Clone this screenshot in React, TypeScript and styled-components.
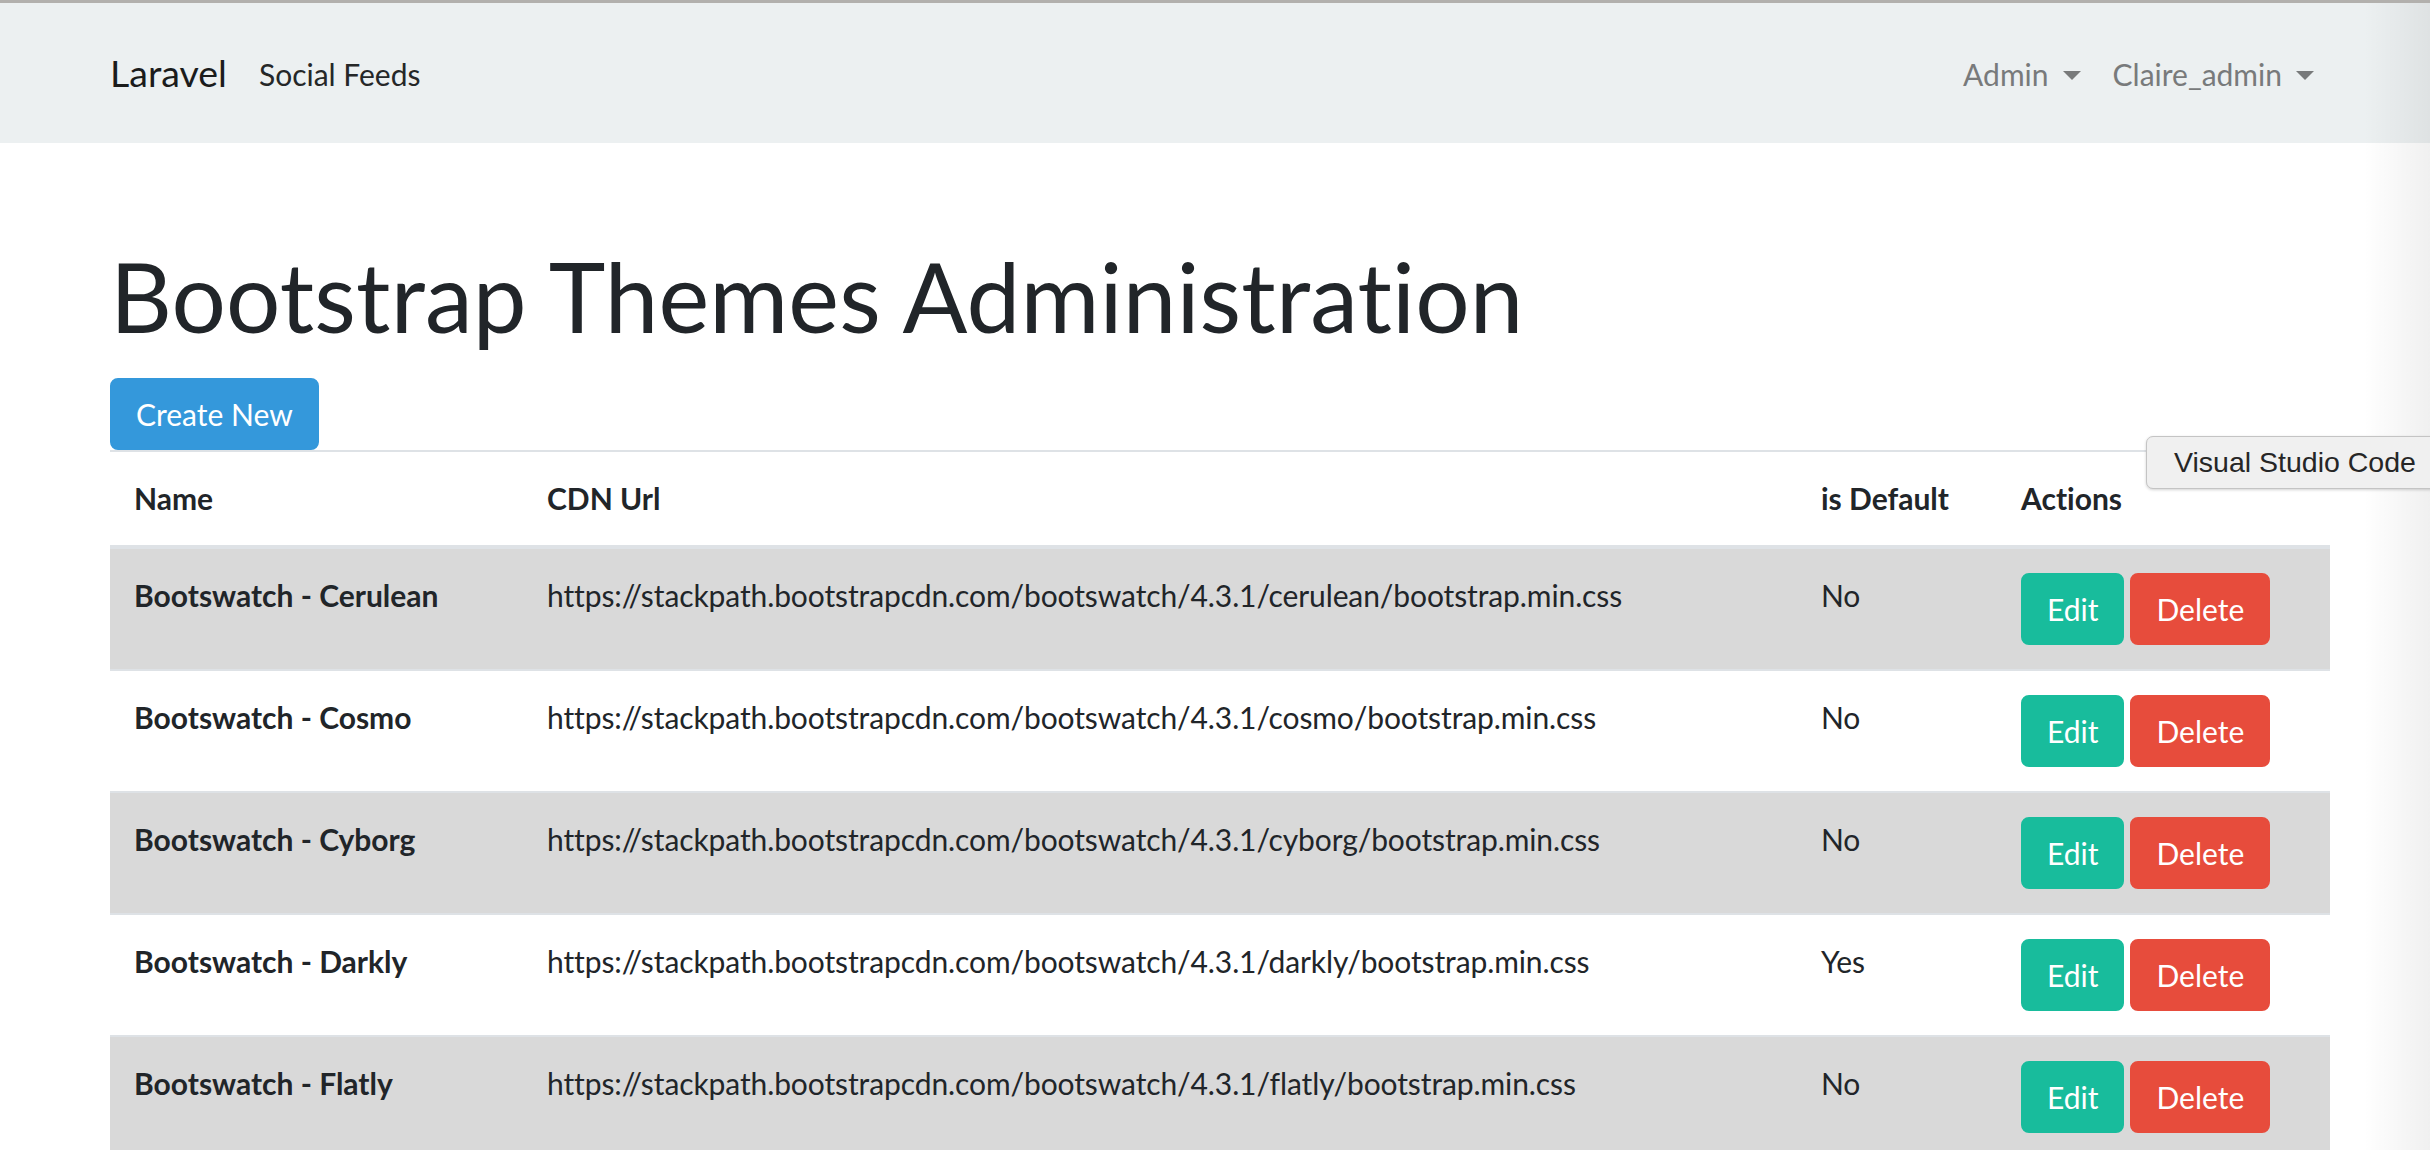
import React from 'react';
import styled, { createGlobalStyle } from 'styled-components';

const GlobalStyle = createGlobalStyle`
  html, body { margin: 0; padding: 0; overflow: hidden; background: #ffffff; }
  body {
    font-family: Lato, "Noto Sans", sans-serif;
    font-size: 30px;
    line-height: 1.5;
    color: #212529;
    font-variant-ligatures: none;
  }
  * { box-sizing: border-box; }
`;

const Page = styled.div`
  position: relative;
  min-height: 1150px;
  border-top: 3px solid #b2b0ad;
`;

const NavBar = styled.nav`
  background: #ecf0f1;
  height: 140px;
`;

const Container = styled.div`
  width: 2280px;
  margin-left: 80px;
  padding: 0 30px;
`;

const NavInner = styled(Container)`
  display: flex;
  align-items: center;
  height: 100%;
`;

const Brand = styled.a`
  font-size: 37.5px;
  line-height: 56px;
  color: #1b1c1c;
  text-decoration: none;
  margin-right: 32px;
`;

const NavGroup = styled.div<{ $right?: boolean }>`
  display: flex;
  align-items: center;
  margin-left: ${(p) => (p.$right ? 'auto' : '0')};
`;

const NavLink = styled.a<{ $active?: boolean; $flush?: boolean }>`
  display: flex;
  align-items: center;
  font-size: 30px;
  line-height: 45px;
  padding: 16px ${(p) => (p.$flush ? '0' : '16px')};
  color: ${(p) => (p.$active ? '#252728' : '#787a7b')};
  text-decoration: none;
  margin-top: 3px;
`;

const Caret = styled.span`
  display: inline-block;
  width: 0;
  height: 0;
  margin-left: 14px;
  border-top: 9px solid currentColor;
  border-left: 9px solid transparent;
  border-right: 9px solid transparent;
  margin-top: 2px;
`;

const Main = styled(Container)`
  padding-top: 95px;
`;

const Title = styled.h1`
  margin: 0 0 25px;
  font-size: 96px;
  font-weight: 400;
  line-height: 1.2;
  letter-spacing: 0.15px;
  color: #212529;
`;

const Toolbar = styled.div`
  display: flex;
`;

const colors = {
  info: '#3498db',
  success: '#18bc9c',
  danger: '#e74c3c',
};

const Button = styled.button<{ $variant: keyof typeof colors }>`
  font-family: Lato, "Noto Sans", sans-serif;
  font-size: 30px;
  line-height: 44px;
  padding: 12px 24px;
  border: 2px solid ${(p) => colors[p.$variant]};
  background: ${(p) => colors[p.$variant]};
  color: #ffffff;
  border-radius: 8px;
  cursor: pointer;
`;

const Table = styled.table`
  width: 2220px;
  border-collapse: separate;
  border-spacing: 0;
  table-layout: fixed;
`;

const Th = styled.th<{ $w: number }>`
  width: ${(p) => p.$w}px;
  text-align: left;
  font-weight: 700;
  padding: 24px;
  line-height: 45px;
  border-top: 2px solid #dee2e6;
  border-bottom: 2px solid #dee2e6;
  vertical-align: bottom;
`;

const Row = styled.tr<{ $striped: boolean }>`
  background: ${(p) => (p.$striped ? '#d9d9d9' : '#ffffff')};
`;

const Td = styled.td<{ $bold?: boolean }>`
  padding: 24px;
  line-height: 45px;
  vertical-align: top;
  border-top: 2px solid #dee2e6;
  font-weight: ${(p) => (p.$bold ? 700 : 400)};
  letter-spacing: ${(p) => (p.$bold ? '0' : '-0.1px')};
  white-space: nowrap;
`;

const Actions = styled.div`
  display: flex;
  gap: 6px;
`;

const Tooltip = styled.div`
  position: absolute;
  top: 433px;
  left: 2146px;
  height: 53px;
  padding: 0 27px;
  font-family: "Liberation Sans", Arial, sans-serif;
  font-size: 28.5px;
  line-height: 50px;
  white-space: nowrap;
  color: #262626;
  background: #f0f0f0;
  border: 1px solid #c4c4c4;
  border-radius: 7px;
  box-shadow: 0 1px 3px rgba(0, 0, 0, 0.18);
  z-index: 3;
`;

const EdgeShade = styled.div`
  position: absolute;
  top: 0;
  right: 0;
  width: 66px;
  height: 100%;
  background: linear-gradient(to right, rgba(0, 0, 0, 0), rgba(0, 0, 0, 0.06));
  pointer-events: none;
  z-index: 2;
`;

const themes = [
  { name: 'Cerulean', slug: 'cerulean', def: 'No' },
  { name: 'Cosmo', slug: 'cosmo', def: 'No' },
  { name: 'Cyborg', slug: 'cyborg', def: 'No' },
  { name: 'Darkly', slug: 'darkly', def: 'Yes' },
  { name: 'Flatly', slug: 'flatly', def: 'No' },
];

export default function App() {
  return (
    <>
      <GlobalStyle />
      <Page>
        <NavBar>
          <NavInner>
            <Brand href="#">Laravel</Brand>
            <NavGroup>
              <NavLink href="#" $active $flush>Social Feeds</NavLink>
            </NavGroup>
            <NavGroup $right>
              <NavLink href="#">Admin<Caret /></NavLink>
              <NavLink href="#">Claire_admin<Caret /></NavLink>
            </NavGroup>
          </NavInner>
        </NavBar>
        <Main>
          <Title>Bootstrap Themes Administration</Title>
          <Toolbar>
            <Button $variant="info">Create New</Button>
          </Toolbar>
          <Table>
            <thead>
              <tr>
                <Th $w={413}>Name</Th>
                <Th $w={1274}>CDN Url</Th>
                <Th $w={200}>is Default</Th>
                <Th $w={333}>Actions</Th>
              </tr>
            </thead>
            <tbody>
              {themes.map((t, i) => (
                <Row key={t.slug} $striped={i % 2 === 0}>
                  <Td $bold>Bootswatch - {t.name}</Td>
                  <Td>{`https://stackpath.bootstrapcdn.com/bootswatch/4.3.1/${t.slug}/bootstrap.min.css`}</Td>
                  <Td>{t.def}</Td>
                  <Td>
                    <Actions>
                      <Button $variant="success">Edit</Button>
                      <Button $variant="danger">Delete</Button>
                    </Actions>
                  </Td>
                </Row>
              ))}
            </tbody>
          </Table>
        </Main>
        <Tooltip>Visual Studio Code</Tooltip>
        <EdgeShade />
      </Page>
    </>
  );
}
